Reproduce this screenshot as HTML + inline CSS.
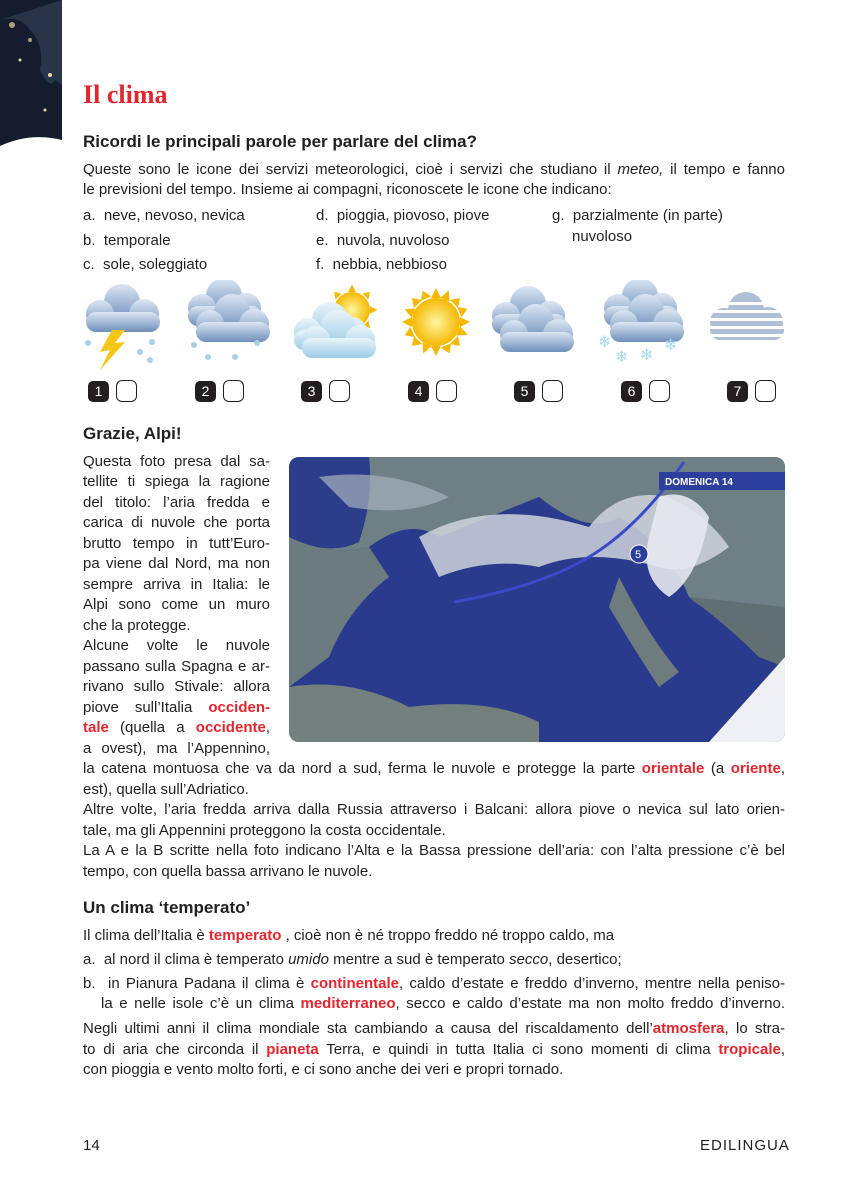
<!DOCTYPE html>
<html><head><meta charset="utf-8"><style>
body{margin:0;background:#fff;}
#p{position:relative;width:868px;height:1200px;overflow:hidden;font-family:"Liberation Sans",sans-serif;color:#231f20;font-size:15px;}
.l{position:absolute;left:83px;white-space:nowrap;line-height:20px;}
.j{text-align:justify;text-align-last:justify;white-space:normal;}
.r{color:#e3262d;font-weight:bold;}
h1{position:absolute;left:83px;top:80px;margin:0;font-family:"Liberation Serif",serif;color:#e3262d;font-size:26px;font-weight:bold;}
.h{position:absolute;left:83px;font-weight:bold;font-size:17px;white-space:nowrap;}
.n{position:absolute;top:381px;width:21px;height:21px;background:#231f20;color:#fff;border-radius:5px;font-size:14px;text-align:center;line-height:21px;}
.b{position:absolute;top:380px;width:19px;height:20px;border:1.5px solid #231f20;border-radius:6px;background:#fff;}
</style></head><body><div id="p">
<svg style="position:absolute;left:0;top:0" width="62" height="150"><rect width="62" height="150" fill="#141c2e"/><path d="M0 20 Q20 15 30 30 Q45 45 40 70 Q50 90 55 80 L62 85 L62 0 Z" fill="#2a3448"/><circle cx="12" cy="25" r="3" fill="#e8d9a0" opacity=".7"/><circle cx="30" cy="40" r="2" fill="#e8d9a0" opacity=".7"/><circle cx="50" cy="75" r="2" fill="#e8d9a0"/><circle cx="20" cy="60" r="1.5" fill="#e8d9a0"/><circle cx="45" cy="110" r="1.5" fill="#e8d9a0"/><path d="M0 150 L0 146 Q30 132 62 140 L62 150 Z" fill="#fff"/></svg>
<h1>Il clima</h1>
<div class="h" style="top:132px">Ricordi le principali parole per parlare del clima?</div>
<div class="l j" style="top:160px;width:702px">Queste sono le icone dei servizi meteorologici, cioè i servizi che studiano il <i>meteo,</i> il tempo e fanno</div>
<div class="l" style="top:180px">le previsioni del tempo. Insieme ai compagni, riconoscete le icone che indicano:</div>
<div class="l" style="top:206px">a.&nbsp; neve, nevoso, nevica</div>
<div class="l" style="top:231px">b.&nbsp; temporale</div>
<div class="l" style="top:255px">c.&nbsp; sole, soleggiato</div>
<div class="l" style="top:206px;left:316px">d.&nbsp; pioggia, piovoso, piove</div>
<div class="l" style="top:231px;left:316px">e.&nbsp; nuvola, nuvoloso</div>
<div class="l" style="top:255px;left:316px">f.&nbsp; nebbia, nebbioso</div>
<div class="l" style="top:206px;left:552px">g.&nbsp; parzialmente (in parte)</div>
<div class="l" style="top:227px;left:572px">nuvoloso</div>
<svg style="position:absolute;left:0;top:280px" width="868" height="100">
<defs><linearGradient id="c" x1="0" y1="0" x2="0" y2="1"><stop offset="0" stop-color="#dbe6f3"/><stop offset="1" stop-color="#6f8fbb"/></linearGradient><linearGradient id="lc" x1="0" y1="0" x2="0" y2="1"><stop offset="0" stop-color="#eaf5fb"/><stop offset="1" stop-color="#9ccbe6"/></linearGradient><radialGradient id="s"><stop offset="0" stop-color="#fff6a0"/><stop offset="1" stop-color="#f5b800"/></radialGradient>
<g id="cl"><circle cx="0" cy="-4" r="18"/><circle cx="-22" cy="8" r="14"/><circle cx="22" cy="8" r="15"/><rect x="-36" y="6" width="74" height="20" rx="10"/></g>
<g id="rays"><polygon points="0,-34 5,-24 -5,-24"/><polygon points="0,34 5,24 -5,24"/><polygon points="-34,0 -24,5 -24,-5"/><polygon points="34,0 24,5 24,-5"/><polygon points="24,-24 14,-22 22,-14"/><polygon points="-24,-24 -14,-22 -22,-14"/><polygon points="24,24 14,22 22,14"/><polygon points="-24,24 -14,22 -22,14"/></g></defs>
<g fill="url(#c)"><use href="#cl" x="122" y="26"/></g>
<path d="M112 50 L100 72 L110 70 L100 90 L125 62 L115 63 L125 50Z" fill="#f5c518"/>
<g fill="#a8cfe8"><circle cx="88" cy="63" r="3"/><circle cx="140" cy="72" r="3"/><circle cx="152" cy="62" r="3"/><circle cx="150" cy="80" r="3"/></g>
<g fill="url(#c)"><use href="#cl" x="224" y="20"/><use href="#cl" x="232" y="36"/></g>
<g fill="#a8cfe8"><circle cx="194" cy="65" r="3"/><circle cx="208" cy="77" r="3"/><circle cx="235" cy="77" r="3"/><circle cx="257" cy="63" r="3"/></g>
<g fill="#f5b800" transform="translate(352,30) scale(.75)"><use href="#rays"/></g><circle cx="352" cy="30" r="18" fill="url(#s)"/>
<g fill="url(#lc)"><use href="#cl" x="330" y="44"/><use href="#cl" x="338" y="52"/></g>
<g fill="#f5b800" transform="translate(436,42)"><use href="#rays"/><use href="#rays" transform="rotate(22)"/></g><circle cx="436" cy="42" r="24" fill="url(#s)"/>
<g fill="url(#c)"><use href="#cl" x="528" y="28"/><use href="#cl" x="536" y="46"/></g>
<g fill="url(#c)"><use href="#cl" x="640" y="20"/><use href="#cl" x="646" y="36"/></g>
<g fill="#a8d8ee" font-size="16" font-family="DejaVu Sans"><text x="598" y="67">❄</text><text x="615" y="82">❄</text><text x="640" y="80">❄</text><text x="664" y="70">❄</text></g>
<g fill="#aebfd6"><use href="#cl" x="746" y="34"/></g>
<g fill="#fff"><rect x="700" y="22" width="100" height="3"/><rect x="700" y="30" width="100" height="3"/><rect x="700" y="38" width="100" height="3"/><rect x="700" y="46" width="100" height="3"/><rect x="700" y="54" width="100" height="3"/><rect x="700" y="62" width="100" height="3"/></g>
</svg>
<div class="n" style="left:88px">1</div><div class="b" style="left:116px"></div>
<div class="n" style="left:195px">2</div><div class="b" style="left:223px"></div>
<div class="n" style="left:301px">3</div><div class="b" style="left:329px"></div>
<div class="n" style="left:408px">4</div><div class="b" style="left:436px"></div>
<div class="n" style="left:514px">5</div><div class="b" style="left:542px"></div>
<div class="n" style="left:621px">6</div><div class="b" style="left:649px"></div>
<div class="n" style="left:727px">7</div><div class="b" style="left:755px"></div>
<div class="h" style="top:424px">Grazie, Alpi!</div>
<svg style="position:absolute;left:289px;top:457px;border-radius:10px" width="496" height="285">
<rect width="496" height="285" fill="#2a3a8c"/>
<path d="M0 0 H496 V150 Q430 170 400 140 Q380 90 330 60 Q300 80 250 40 Q200 60 150 80 Q120 60 80 90 Q40 100 0 80Z" fill="#6f7f86"/>
<path d="M0 0 H80 Q85 40 70 85 Q40 100 0 80Z" fill="#2c3d8a"/>
<path d="M0 80 Q40 100 80 90 L100 120 Q60 150 40 200 L0 230Z" fill="#6c7b7f"/>
<path d="M0 230 Q60 220 120 250 Q200 240 250 265 L250 285 H0Z" fill="#73807e"/>
<path d="M400 140 Q440 170 470 200 L496 210 V150Z" fill="#5f6f72"/>
<path d="M330 120 Q360 180 390 215 L370 230 Q350 200 320 150Z" fill="#6f7c7d"/>
<path d="M130 80 Q200 40 300 70 Q330 30 380 40 Q420 60 440 90 Q400 120 370 110 Q300 90 250 110 Q200 100 150 120Z" fill="#cfd4dc" opacity=".85"/>
<path d="M370 40 Q400 30 420 60 Q410 120 380 140 Q350 120 360 80Z" fill="#e6e9ee" opacity=".9"/>
<path d="M496 200 L420 285 H496Z" fill="#eef0f4"/>
<path d="M30 20 Q100 10 160 40 Q120 60 60 50Z" fill="#a7b1bb" opacity=".7"/>
<path d="M165 145 Q250 130 300 100 Q350 70 395 5" stroke="#3b4bc8" stroke-width="3" fill="none"/>
<rect x="370" y="15" width="126" height="18" fill="#2c3f9e"/>
<text x="376" y="28" fill="#fff" font-size="10" font-weight="bold" font-family="Liberation Sans">DOMENICA 14</text>
<circle cx="350" cy="97" r="9" fill="#2c3f9e" stroke="#fff"/><text x="346" y="101" fill="#fff" font-size="11" font-family="Liberation Sans">5</text>
</svg>
<div class="l j" style="top:452px;width:187px">Questa foto presa dal sa-</div>
<div class="l j" style="top:472px;width:187px">tellite ti spiega la ragione</div>
<div class="l j" style="top:493px;width:187px">del titolo: l’aria fredda e</div>
<div class="l j" style="top:513px;width:187px">carica di nuvole che porta</div>
<div class="l j" style="top:534px;width:187px">brutto tempo in tutt’Euro-</div>
<div class="l j" style="top:554px;width:187px">pa viene dal Nord, ma non</div>
<div class="l j" style="top:575px;width:187px">sempre arriva in Italia: le</div>
<div class="l j" style="top:595px;width:187px">Alpi sono come un muro</div>
<div class="l" style="top:616px">che la protegge.</div>
<div class="l j" style="top:636px;width:187px">Alcune volte le nuvole</div>
<div class="l j" style="top:657px;width:187px">passano sulla Spagna e ar-</div>
<div class="l j" style="top:677px;width:187px">rivano sullo Stivale: allora</div>
<div class="l j" style="top:698px;width:187px">piove sull’Italia <span class="r">occiden-</span></div>
<div class="l j" style="top:718px;width:187px"><span class="r">tale</span> (quella a <span class="r">occidente</span>,</div>
<div class="l j" style="top:739px;width:187px">a ovest), ma l’Appennino,</div>
<div class="l j" style="top:759px;width:702px">la catena montuosa che va da nord a sud, ferma le nuvole e protegge la parte <span class="r">orientale</span> (a <span class="r">oriente</span>,</div>
<div class="l" style="top:780px">est), quella sull’Adriatico.</div>
<div class="l j" style="top:800px;width:702px">Altre volte, l’aria fredda arriva dalla Russia attraverso i Balcani: allora piove o nevica sul lato orien-</div>
<div class="l" style="top:821px">tale, ma gli Appennini proteggono la costa occidentale.</div>
<div class="l j" style="top:841px;width:702px">La A e la B scritte nella foto indicano l’Alta e la Bassa pressione dell’aria: con l’alta pressione c’è bel</div>
<div class="l" style="top:862px">tempo, con quella bassa arrivano le nuvole.</div>
<div class="h" style="top:898px">Un clima ‘temperato’</div>
<div class="l" style="top:926px">Il clima dell’Italia è <span class="r">temperato</span> , cioè non è né troppo freddo né troppo caldo, ma</div>
<div class="l" style="top:950px">a.&nbsp; al nord il clima è temperato <i>umido</i> mentre a sud è temperato <i>secco</i>, desertico;</div>
<div class="l j" style="top:974px;width:702px">b.&nbsp; in Pianura Padana il clima è <span class="r">continentale</span>, caldo d’estate e freddo d’inverno, mentre nella peniso-</div>
<div class="l j" style="top:994px;left:101px;width:684px">la e nelle isole c’è un clima <span class="r">mediterraneo</span>, secco e caldo d’estate ma non molto freddo d’inverno.</div>
<div class="l j" style="top:1019px;width:702px">Negli ultimi anni il clima mondiale sta cambiando a causa del riscaldamento dell’<span class="r">atmosfera</span>, lo stra-</div>
<div class="l j" style="top:1040px;width:702px">to di aria che circonda il <span class="r">pianeta</span> Terra, e quindi in tutta Italia ci sono momenti di clima <span class="r">tropicale</span>,</div>
<div class="l" style="top:1060px">con pioggia e vento molto forti, e ci sono anche dei veri e propri tornado.</div>
<div class="l" style="top:1136px">14</div>
<div class="l" style="top:1136px;left:700px;font-size:15px;letter-spacing:1px">EDILINGUA</div>
</div></body></html>
